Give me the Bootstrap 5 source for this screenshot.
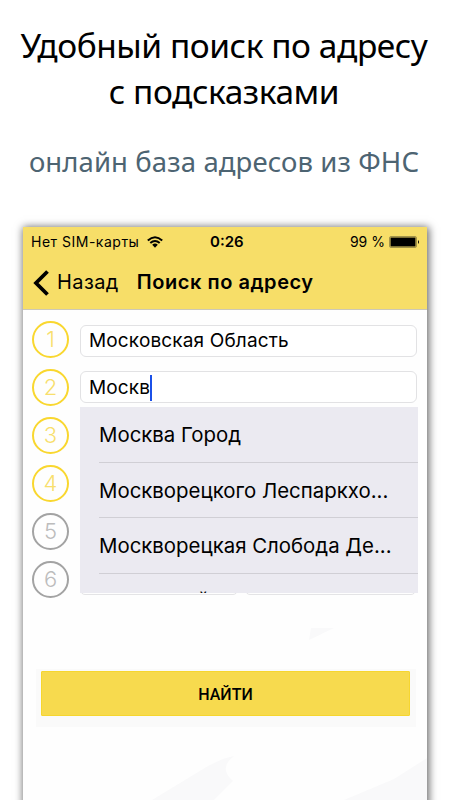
<!DOCTYPE html>
<html lang="ru">
<head>
    <meta charset="UTF-8">
    <meta name="viewport" content="width=device-width, initial-scale=1">
    <title>Поиск по адресу</title>
    <link href="https://cdn.jsdelivr.net/npm/bootstrap@5.3.2/dist/css/bootstrap.min.css" rel="stylesheet">
    <style>
        body { height: 800px; overflow: hidden; background: #fff; color: #000; font-family: Inter, "Noto Sans", sans-serif; }
        .promo { height: 227px; padding: 22px 2px 0 0; font-family: "Noto Sans", "Open Sans", sans-serif; white-space: nowrap; }
        .promo h1 { font-size: 33.5px; line-height: 46px; font-weight: 400; letter-spacing: -.45px; }
        .promo p { font-size: 27.5px; line-height: 38px; letter-spacing: .1px; color: #4d6472; margin-top: 29px; }
        .phone { width: 404px; height: 580px; margin-left: 23px; background: #fefefe; box-shadow: 1px 1px 8px 1px rgba(0, 0, 0, .6); }
        .phone-head { height: 83px; background: #f7de68; border-bottom: 1px solid #ccc8b8; }
        .status { height: 29px; padding: 0 7px 0 8px; font-size: 14px; line-height: 29px; }
        .status > div { flex: 1 1 0; white-space: nowrap; }
        .status-carrier { letter-spacing: .5px; }
        .status-time { font-size: 15px; padding-right: 3px; }
        .nav-row { height: 53px; padding-left: 10px; font-size: 20px; line-height: 53px; letter-spacing: .4px; }
        .nav-row strong { font-weight: 600; margin-left: 18px; letter-spacing: .55px; }
        .steps { width: 37px; margin: 11px 0 0 9px; gap: 11px; }
        .step { width: 37px; height: 37px; border: 2px solid #f9d72f; border-radius: 50%; color: #f8df6c; font-size: 22px; font-weight: 300; line-height: 33px; text-align: center; }
        .step.idle { border-color: #a3a3a3; color: #bcbcbc; }
        .fields { width: 338px; margin: 15px 0 0 11px; }
        .field { width: 337px; height: 32px; margin-bottom: 14px; padding: 1px 0 0 8px; border: 1px solid #e2e2e4; border-radius: 6px; background: #fff; font-size: 19px; letter-spacing: .15px; }
        .field + .field { padding-top: 2px; }
        .caret { width: 2px; height: 26px; background: #1b50e8; }
        .half-fields { margin-top: 160px; gap: 7px; }
        .half-fields div { height: 32px; border: 1px solid #e4e4e6; border-radius: 5px; }
        .half-fields div:first-child { width: 158px; }
        .half-fields div:last-child { width: 171px; }
        .suggest { left: 0; top: 82px; width: 338px; height: 186px; overflow: hidden; background: #ebeaf1; padding-left: 19px; }
        .suggest div { height: 55.5px; line-height: 55px; border-bottom: 1px solid #d0cfd5; font-size: 20.4px; white-space: nowrap; }
        .suggest div:last-child { line-height: 54px; }
        .find-wrap { width: 380px; height: 58px; margin: 71px 0 0 13px; padding: 2px 6px 11px 5px; background: #fafafa; }
        .find-wrap .btn { height: 45px; padding: 2px 0 0; border: 1px solid #f6d62f; border-radius: 1px; background: #f7da4e; color: #000; font-family: Roboto, sans-serif; font-size: 16px; font-weight: 500; }
        .backdrop-art { left: 0; bottom: 7px; }
    </style>
</head>
<body>

<div class="promo text-center">
    <h1 class="m-0" id="promoTitle">Удобный поиск по адресу<br>с подсказками</h1>
    <p class="mb-0">онлайн база адресов из ФНС</p>
</div>

<div class="phone position-relative">
    <!-- pale map shapes under the form -->
    <svg class="backdrop-art position-absolute" width="404" height="180" fill="#f9f9fa">
        <path d="M288 8h23l-25 12zM129 180l56-34q15-8 26-10-16 12-1 25l-19 19zM321 180l50-21 33-21v42z"/>
    </svg>

    <div class="phone-head">
        <div class="status d-flex">
            <div class="status-carrier d-flex align-items-center">Нет SIM-карты
                <svg class="ms-2" width="16" height="12" viewBox="0 0 16 12" fill="none" stroke="#000" stroke-width="2">
                    <path d="M.8 4.5Q8-2 15.2 4.5M3.3 7.1Q8 2.9 12.7 7.1"/>
                    <path d="M5.2 8.7Q8 6.5 10.8 8.7L8 11.7z" fill="#000" stroke="none"/>
                </svg>
            </div>
            <div class="status-time text-center fw-semibold">0:26</div>
            <div class="d-flex justify-content-end align-items-center">99&nbsp;%
                <svg class="ms-1" width="31" height="12" viewBox="0 0 31 12">
                    <rect x=".5" y=".5" width="27" height="11" rx="1.5" fill="none" stroke="#a2934a"/>
                    <path d="M1.5 1.5h25v9h-25z"/>
                    <path d="M29 4q2 2 0 4z"/>
                </svg>
            </div>
        </div>
        <div class="nav-row d-flex align-items-center">
            <svg width="16" height="26" viewBox="0 0 16 26" fill="none" stroke="#000" stroke-width="3.8"><path d="M14.5 1.5L3 13l11.5 11.5"/></svg>
            <span class="ms-2">Назад</span>
            <strong>Поиск по адресу</strong>
        </div>
    </div>

    <div class="d-flex position-relative">
        <div class="steps d-flex flex-column">
            <div class="step">1</div>
            <div class="step">2</div>
            <div class="step">3</div>
            <div class="step">4</div>
            <div class="step idle">5</div>
            <div class="step idle">6</div>
        </div>
        <div class="fields position-relative">
            <div class="field d-flex align-items-center">Московская Область</div>
            <div class="field d-flex align-items-center">Москв<span class="caret"></span></div>
            <div class="half-fields d-flex"><div></div><div></div></div>
            <!-- suggestion list, the last row is cut off by the list's edge -->
            <div class="suggest position-absolute">
                <div>Москва Город</div>
                <div>Москворецкого Леспаркхо...</div>
                <div>Москворецкая Слобода Де...</div>
                <div>Орловский</div>
            </div>
        </div>
    </div>

    <div class="find-wrap position-relative">
        <button type="button" class="btn w-100 d-block">НАЙТИ</button>
    </div>
</div>

<script src="https://cdn.jsdelivr.net/npm/bootstrap@5.3.2/dist/js/bootstrap.bundle.min.js"></script>
</body>
</html>
